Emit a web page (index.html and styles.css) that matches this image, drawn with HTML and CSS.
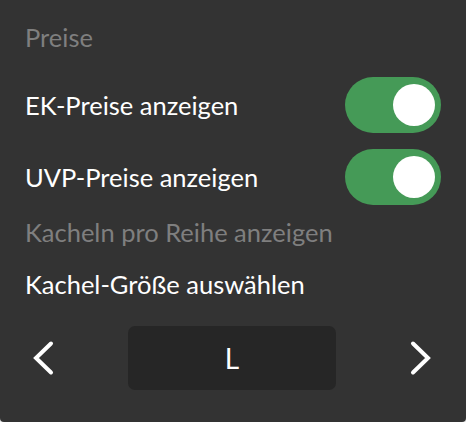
FILE: index.html
```html
<!DOCTYPE html>
<html lang="de">
<head>
  <meta charset="UTF-8">
  <title>Einstellungen</title>
  <link rel="stylesheet" href="styles.css">
</head>
<body>

  <div class="panel">
    <div class="section-title">Preise</div>

    <div class="toggle-row first">
      <span class="label">EK-Preise anzeigen</span>
      <div class="switch on"><span class="knob"></span></div>
    </div>

    <div class="toggle-row">
      <span class="label">UVP-Preise anzeigen</span>
      <div class="switch on"><span class="knob"></span></div>
    </div>

    <div class="section-title sub">Kacheln pro Reihe anzeigen</div>
    <div class="label size-label">Kachel-Größe auswählen</div>

    <div class="stepper">
      <button class="arrow prev">
        <svg width="24" height="36" viewBox="0 0 24 36"><polyline points="20,3.5 5,18 20,32.5" /></svg>
      </button>
      <div class="size-box">L</div>
      <button class="arrow next">
        <svg width="24" height="36" viewBox="0 0 24 36"><polyline points="4,3.5 19,18 4,32.5" /></svg>
      </button>
    </div>
  </div>

</body>
</html>
```

FILE: styles.css
```css
body {
  margin: 0;
  background: #e9e9e9;
  font-family: Lato, "Open Sans", sans-serif;
}

.panel {
  width: 466px;
  height: 422px;
  box-sizing: border-box;
  padding: 23px 25px 0;
  background: #333333;
  border-radius: 0 0 4px 4px;
}

.section-title {
  font-size: 25.5px;
  line-height: 29px;
  color: #7f7f7f;
}

.section-title.sub {
  margin-top: 13px;
}

.label {
  font-size: 25.5px;
  line-height: 29px;
  color: #ffffff;
}

.toggle-row {
  display: flex;
  justify-content: space-between;
  align-items: center;
  height: 56px;
  margin-top: 16px;
}

.toggle-row.first {
  margin-top: 25px;
}

.switch {
  width: 96px;
  height: 56px;
  box-sizing: border-box;
  padding: 0 6px;
  border-radius: 28px;
  background: #3a3a3a;
  display: flex;
  align-items: center;
}

.switch.on {
  background: #459a57;
  justify-content: flex-end;
}

.knob {
  width: 42px;
  height: 42px;
  border-radius: 50%;
  background: #ffffff;
}

.size-label {
  margin-top: 23px;
}

.stepper {
  display: grid;
  grid-template-columns: 1fr 208px 1fr;
  align-items: center;
  margin-top: 27px;
  padding-right: 2px;
}

.arrow {
  all: unset;
  width: 36px;
  height: 64px;
  display: flex;
  align-items: center;
  justify-content: center;
  cursor: pointer;
}

.arrow.next {
  justify-self: end;
}

.arrow polyline {
  fill: none;
  stroke: #ffffff;
  stroke-width: 4;
  stroke-linecap: round;
  stroke-linejoin: miter;
}

.size-box {
  height: 64px;
  border-radius: 7px;
  background: #262626;
  color: #ffffff;
  font-size: 28px;
  display: flex;
  align-items: center;
  justify-content: center;
}
```
